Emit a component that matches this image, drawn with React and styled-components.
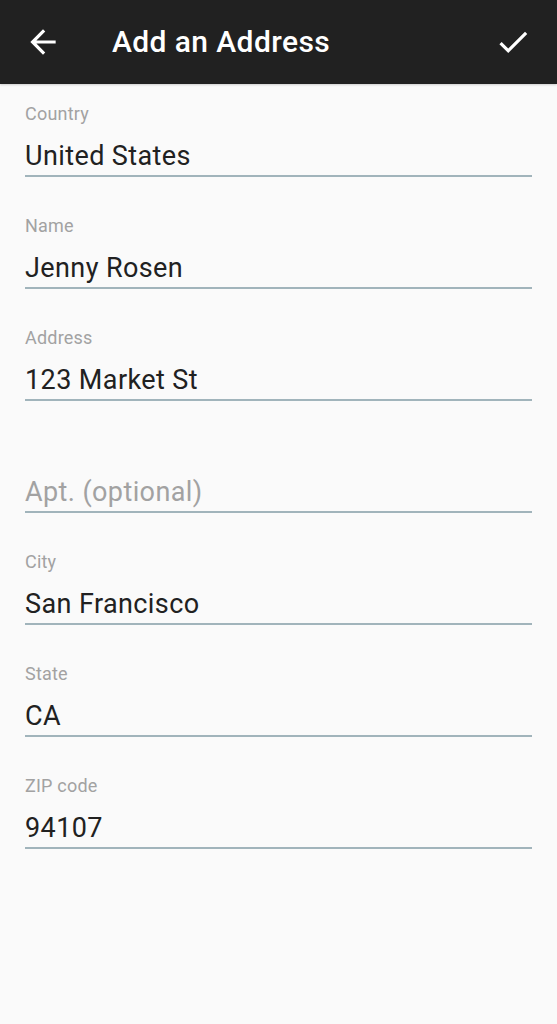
import React from 'react';
import styled, { createGlobalStyle } from 'styled-components';

const GlobalStyle = createGlobalStyle`
  html, body {
    margin: 0;
    padding: 0;
    background: #fafafa;
  }
  body {
    font-family: Roboto, "Noto Sans", sans-serif;
  }
`;

const Screen = styled.div`
  width: 557px;
  min-height: 1024px;
  background: #fafafa;
`;

const Toolbar = styled.header`
  height: 84px;
  background: #212121;
  display: flex;
  align-items: center;
  padding: 0 25px 0 24px;
  box-sizing: border-box;
  box-shadow: 0 1px 2px rgba(0, 0, 0, 0.18);
`;

const IconButton = styled.button`
  width: 38px;
  height: 38px;
  padding: 0;
  border: none;
  background: none;
  display: flex;
  align-items: center;
  justify-content: center;
  cursor: pointer;
  svg {
    width: 38px;
    height: 38px;
    fill: #ffffff;
  }
`;

const Title = styled.h1`
  flex: 1;
  margin: 0 0 0 50px;
  color: #ffffff;
  font-size: 30px;
  font-weight: 500;
  line-height: 34px;
  letter-spacing: 0.4px;
`;

const Form = styled.form`
  display: flex;
  flex-direction: column;
  gap: 39px;
  padding: 20px 25px 0;
`;

const Field = styled.label`
  display: flex;
  flex-direction: column;
  border-bottom: 2px solid #a1b4bb;
`;

const Label = styled.span`
  height: 20px;
  font-size: 18px;
  line-height: 20px;
  letter-spacing: 0.2px;
  color: #a2a2a2;
`;

const Input = styled.input`
  margin-top: 17px;
  padding: 0 0 4px;
  border: none;
  outline: none;
  background: transparent;
  font-family: Roboto, "Noto Sans", sans-serif;
  font-size: 27px;
  line-height: 30px;
  letter-spacing: 0.4px;
  height: 34px;
  box-sizing: border-box;
  color: #212121;
  &::placeholder {
    color: #a2a2a2;
  }
`;

const fields = [
  { label: 'Country', value: 'United States' },
  { label: 'Name', value: 'Jenny Rosen' },
  { label: 'Address', value: '123 Market St' },
  { label: '', value: '', placeholder: 'Apt. (optional)' },
  { label: 'City', value: 'San Francisco' },
  { label: 'State', value: 'CA' },
  { label: 'ZIP code', value: '94107' },
];

const App = () => {
  return (
    <>
      <GlobalStyle />
      <Screen>
        <Toolbar>
          <IconButton aria-label="Back">
            <svg viewBox="0 0 24 24">
              <path d="M20 11H7.83l5.59-5.59L12 4l-8 8 8 8 1.41-1.41L7.83 13H20v-2z" />
            </svg>
          </IconButton>
          <Title>Add an Address</Title>
          <IconButton aria-label="Save">
            <svg viewBox="0 0 24 24">
              <path d="M9 16.17L4.83 12l-1.42 1.41L9 19 21 7l-1.41-1.41z" />
            </svg>
          </IconButton>
        </Toolbar>
        <Form>
          {fields.map((f, i) => (
            <Field key={i}>
              <Label>{f.label}</Label>
              <Input defaultValue={f.value} placeholder={f.placeholder} />
            </Field>
          ))}
        </Form>
      </Screen>
    </>
  );
};

export default App;
